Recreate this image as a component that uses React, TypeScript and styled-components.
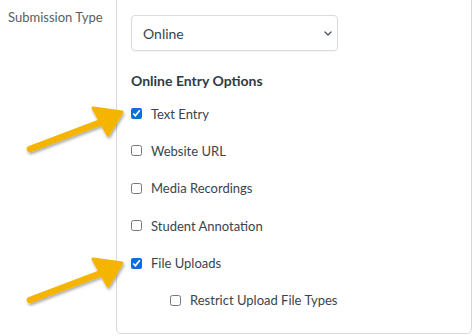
import React from 'react';
import styled, { createGlobalStyle } from 'styled-components';

const GlobalStyle = createGlobalStyle`
  html, body {
    margin: 0;
    padding: 0;
    background: #ffffff;
  }
  body {
    font-family: Lato, "Open Sans", sans-serif;
    color: #2d3b45;
  }
`;

type Option = { label: string; checked: boolean; nested?: boolean };

const OPTIONS: Option[] = [
  { label: 'Text Entry', checked: true },
  { label: 'Website URL', checked: false },
  { label: 'Media Recordings', checked: false },
  { label: 'Student Annotation', checked: false },
  { label: 'File Uploads', checked: true },
  { label: 'Restrict Upload File Types', checked: false, nested: true },
];

const Arrow: React.FC<{ top: number }> = ({ top }) => (
  <ArrowSvg style={{ top }} width="110" height="50" viewBox="0 0 110 50">
    <defs>
      <filter id={`s${top}`} x="-20%" y="-40%" width="140%" height="180%">
        <feDropShadow dx="1" dy="2" stdDeviation="1.5" floodColor="#000" floodOpacity="0.35" />
      </filter>
    </defs>
    <g filter={`url(#s${top})`}>
      <line x1="8" y1="43" x2="82" y2="15" stroke="#f4b400" strokeWidth="6.5" strokeLinecap="round" />
      <path d="M100 6 L71 2 L86 29 Z" fill="#f4b400" stroke="#f4b400" strokeWidth="3" strokeLinejoin="round" />
    </g>
  </ArrowSvg>
);

export default function App() {
  return (
    <>
      <GlobalStyle />
      <Page>
        <Label>Submission Type</Label>
        <Panel>
          <SelectWrap>
            <Select defaultValue="online">
              <option value="online">Online</option>
            </Select>
            <Chevron width="8" height="5" viewBox="0 0 8 5">
              <path d="M1 1 L4 4 L7 1" fill="none" stroke="#4a545c" strokeWidth="1.3" strokeLinecap="round" strokeLinejoin="round" />
            </Chevron>
          </SelectWrap>
          <Heading>Online Entry Options</Heading>
          <List>
            {OPTIONS.map((o) => (
              <Row key={o.label} $nested={o.nested}>
                <Check type="checkbox" defaultChecked={o.checked} />
                <span>{o.label}</span>
              </Row>
            ))}
          </List>
        </Panel>
        <Arrow top={106} />
        <Arrow top={257} />
      </Page>
    </>
  );
}

const Page = styled.div`
  position: relative;
  width: 474px;
  height: 336px;
  display: flex;
  align-items: flex-start;
  overflow: hidden;
`;

const Label = styled.div`
  width: 108px;
  padding: 9px 0 0 8px;
  font-size: 13px;
  color: #555e66;
  box-sizing: border-box;
  margin-right: 8px;
`;

const Panel = styled.div`
  margin-top: -6px;
  width: 356px;
  height: 340px;
  box-sizing: border-box;
  border: 1px solid #d7dadd;
  border-radius: 5px;
  padding: 20px 14px 0 14px;
`;

const SelectWrap = styled.div`
  position: relative;
  width: 207px;
`;

const Select = styled.select`
  appearance: none;
  width: 100%;
  height: 36px;
  border: 1px solid #d9dcdf;
  border-radius: 4px;
  background: #fff;
  box-shadow: 0 1px 1px rgba(0, 0, 0, 0.04);
  font-family: Lato, sans-serif;
  font-size: 14px;
  color: #3a444c;
  padding: 0 11px;
  display: block;
  outline: none;
`;

const Chevron = styled.svg`
  position: absolute;
  right: 6px;
  top: 16px;
  pointer-events: none;
`;

const Heading = styled.div`
  margin-top: 21px;
  font-size: 14px;
  font-weight: 700;
  color: #2d3b45;
`;

const List = styled.div`
  margin-top: 16px;
  display: flex;
  flex-direction: column;
  gap: 20.4px;
`;

const Row = styled.label<{ $nested?: boolean }>`
  display: flex;
  align-items: center;
  gap: 9px;
  height: 17px;
  font-size: 13px;
  color: #3a444c;
  padding-left: ${(p) => (p.$nested ? '39px' : '0')};
`;

const Check = styled.input`
  margin: 0;
  width: 11px;
  height: 11px;
  accent-color: #0b6ee0;
`;

const ArrowSvg = styled.svg`
  position: absolute;
  left: 22px;
`;
